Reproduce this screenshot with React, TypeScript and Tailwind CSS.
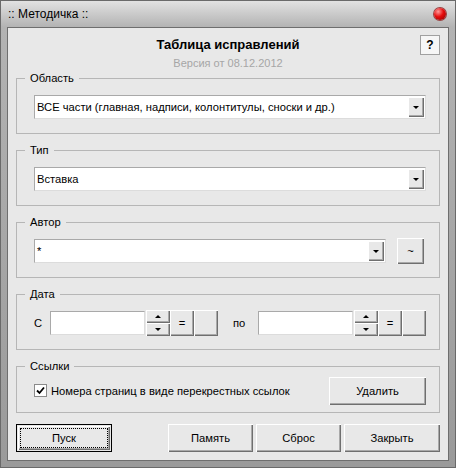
import React from "react";

const raised =
  "bg-[#e8e8e8] shadow-[inset_1px_1px_0_#ffffff,inset_-1px_-1px_0_#6f6f6f,inset_-2px_-2px_0_#a9a9a9]";

function Btn({ children, className = "" }: { children?: React.ReactNode; className?: string }) {
  return (
    <div className={`flex items-center justify-center ${raised} ${className}`}>
      {children}
    </div>
  );
}

function Arrow({ up = false }: { up?: boolean }) {
  return up ? (
    <div className="w-0 h-0 border-l-[3px] border-r-[3px] border-b-[3px] border-l-transparent border-r-transparent border-b-black" />
  ) : (
    <div className="w-0 h-0 border-l-[3px] border-r-[3px] border-t-[3px] border-l-transparent border-r-transparent border-t-black" />
  );
}

function Combo({ value, className = "" }: { value: string; className?: string }) {
  return (
    <div className={`flex items-center h-[24px] bg-white border border-[#a9a9a9] border-b-[#dcdcdc] border-r-[#dcdcdc] ${className}`}>
      <span className="flex-1 pl-[2px] truncate">{value}</span>
      <Btn className="w-[16px] h-[20px] mr-[1px]">
        <Arrow />
      </Btn>
    </div>
  );
}

function Group({ title, h, children }: { title: string; h: string; children: React.ReactNode }) {
  return (
    <fieldset className={`border border-[#b6b6b6] px-[8px] ${h}`}>
      <legend className="px-[5px] leading-[14px]">{title}</legend>
      <div className="pl-[9px]">{children}</div>
    </fieldset>
  );
}

function DateField() {
  return (
    <div className="flex items-center">
      <div className="w-[95px] h-[24px] bg-white border border-[#a9a9a9] border-b-[#dcdcdc] border-r-[#dcdcdc]" />
      <div className="flex flex-col ml-[1px] w-[24px] h-[26px]">
        <Btn className="h-[13px]">
          <Arrow up />
        </Btn>
        <Btn className="h-[13px]">
          <Arrow />
        </Btn>
      </div>
      <Btn className="w-[24px] h-[26px]">=</Btn>
      <Btn className="w-[24px] h-[26px]" />
    </div>
  );
}

export default function App() {
  return (
    <div className="w-[456px] h-[468px] flex flex-col bg-[#9c9c9c] text-[11.2px] text-black font-['Liberation_Sans',sans-serif] border border-[#6a6a6a]">
      <div className="h-[26px] flex items-center justify-between pl-[7px] pr-[9px] bg-gradient-to-b from-[#e2e2e2] to-[#b3b3b3]">
        <span className="text-[12px]">:: Методичка ::</span>
        <div className="w-[12px] h-[12px] rounded-full bg-[radial-gradient(circle_at_35%_30%,#ff9a9a_0%,#e60d0d_45%,#8a0000_100%)] shadow-[0_0_0_1px_#9a4040]" />
      </div>
      <div className="flex-1 flex flex-col px-[6px] pb-[6px] bg-gradient-to-b from-[#b3b3b3] to-[#9a9a9a]">
        <div className="flex-1 flex flex-col bg-[#e8e8e8] border border-[#6e6e6e] px-[8px]">
          <div className="grid grid-cols-[1fr_auto_1fr] h-[43px]">
            <div />
            <div className="flex flex-col items-center">
              <div className="mt-[9px] text-[13px] font-bold leading-[16px]">Таблица исправлений</div>
              <div className="mt-[3px] text-[11px] leading-[14px] text-[#a6a6a6]">Версия от 08.12.2012</div>
            </div>
            <div className="flex justify-end">
              <div className="mt-[7px] w-[20px] h-[20px] flex items-center justify-center bg-[#f6f6f6] border border-[#a0a0a0] font-bold text-[12px]">?</div>
            </div>
          </div>

          <div className="flex flex-col gap-[9px]">
            <Group title="Область" h="h-[63px]">
              <div className="pt-[10px]">
                <Combo value="ВСЕ части (главная, надписи, колонтитулы, сноски и др.)" className="w-[392px]" />
              </div>
            </Group>
            <Group title="Тип" h="h-[63px]">
              <div className="pt-[10px]">
                <Combo value="Вставка" className="w-[392px]" />
              </div>
            </Group>
            <Group title="Автор" h="h-[63px]">
              <div className="pt-[9px] flex items-center">
                <Combo value="*" className="w-[352px]" />
                <Btn className="ml-[11px] w-[27px] h-[26px]">~</Btn>
              </div>
            </Group>
            <Group title="Дата" h="h-[63px]">
              <div className="pt-[9px] flex items-center">
                <span className="w-[16px]">С</span>
                <DateField />
                <span className="ml-[15px] w-[25px]">по</span>
                <DateField />
              </div>
            </Group>
            <Group title="Ссылки" h="h-[54px]">
              <div className="pt-[4px] flex items-center justify-between pr-[5px]">
                <label className="flex items-center gap-[4px]">
                  <span className="w-[13px] h-[13px] bg-white border border-[#8a8a8a] flex items-center justify-center">
                    <svg width="9" height="9" viewBox="0 0 9 9">
                      <path d="M1 4.5 L3.5 7 L8 1.5" stroke="black" strokeWidth="1.8" fill="none" />
                    </svg>
                  </span>
                  <span>Номера страниц в виде перекрестных ссылок</span>
                </label>
                <Btn className="w-[97px] h-[28px]">Удалить</Btn>
              </div>
            </Group>
          </div>

          <div className="mt-[11px] flex items-center">
            <div className="w-[96px] h-[28px] border border-black p-[1px]">
              <Btn className="w-full h-full">
                <div className="w-[88px] h-[20px] border border-dotted border-black flex items-center justify-center">Пуск</div>
              </Btn>
            </div>
            <Btn className="ml-[56px] w-[85px] h-[28px]">Память</Btn>
            <Btn className="ml-[3px] w-[85px] h-[28px]">Сброс</Btn>
            <Btn className="ml-[3px] w-[96px] h-[28px]">Закрыть</Btn>
          </div>
        </div>
      </div>
    </div>
  );
}
